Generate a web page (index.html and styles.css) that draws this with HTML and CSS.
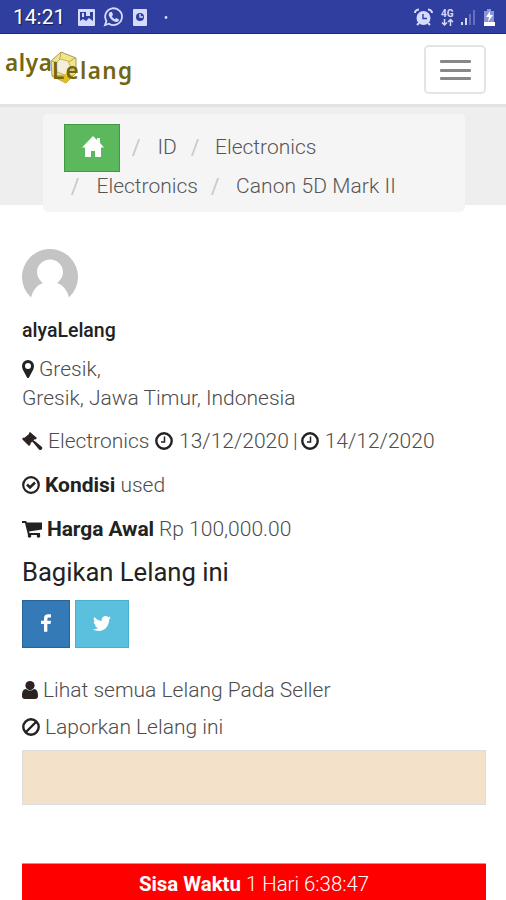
FILE: index.html
```html
<!DOCTYPE html>
<html lang="id">
<head>
<meta charset="utf-8">
<title>alyaLelang</title>
<link rel="stylesheet" href="styles.css">
</head>
<body>
<div class="status">
  <span class="time">14:21</span>
  <svg class="left-icons" width="92" height="34" viewBox="0 0 92 34">
    <path fill="#d6dafb" fill-rule="evenodd" d="M3 9h15q1 0 1 1v15q0 1-1 1H3q-1 0-1-1V10q0-1 1-1zM4 12v9l3-2 3 2 3-3 4 3v-9z"/>
    <path fill="#d6dafb" d="M6 13h2v4H6zM10 12h4v4h-4z"/>
    <path fill="none" stroke="#d6dafb" stroke-width="1.8" d="M29 25l1.400-4A8.400 8.400 0 1 1 33 23.700z"/>
    <path fill="#d6dafb" d="M34 12l2 0 1 3-1.200 1.200q1 2 3 3l1.400-1.200 2.800 1.500q0 2.500-2.800 2.500-5-1-7.400-6.500-.5-2 1.200-3.500z"/>
    <rect x="57" y="9" width="14" height="17" rx="1" fill="#d6dafb"/>
    <circle cx="64" cy="17" r="4" fill="#303f9f"/>
    <path d="M64 14v3h3" fill="none" stroke="#d6dafb" stroke-width="1.400"/>
    <circle cx="90" cy="17.500" r="1.400" fill="#d6dafb"/>
  </svg>
  <svg class="right-icons" width="86" height="34" viewBox="0 0 86 34">
    <g fill="none" stroke="#d6dafb" stroke-width="2">
      <circle cx="10.500" cy="18" r="6" fill="#d6dafb"/>
      <path d="M2 13q0-3 4-3.500M19 13q0-3-4-3.500M6 23l-2 2M15 23l2 2"/>
    </g>
    <path d="M10 14v4.500h4" fill="none" stroke="#303f9f" stroke-width="1.400"/>
    <text x="28" y="17" class="net">4G</text>
    <path d="M31.500 19v6M29 22.500l2.500 2.500 2.500-2.500M37.500 26v-6M35 22l2.500-2.500L40 22" fill="none" stroke="#d6dafb" stroke-width="1.500"/>
    <path fill="#d6dafb" d="M48 22h2v3h-2zM52 18h2v7h-2z"/>
    <path fill="#6570bd" d="M56 14h2v11h-2zM60 10h2v15h-2z"/>
    <path fill="#8b96d6" d="M74 9h4v2h3v11H71V11h3z"/>
    <path fill="#fff" d="M77 11l-4 6h3l-1 5 5-7h-3zM71 22h11v4H71z"/>
  </svg>
</div>
<header class="navbar">
  <svg class="logo" width="134" height="50" viewBox="0 0 134 50">
    <path d="M61 7l15 6 0 15-10 10-14-7-1-15z" fill="#efe58b" stroke="#a99a58"/>
    <path d="M61 7l-2 11-8-2M75 13l-8 5 9 10M66 38l-1-8-13 1" fill="none" stroke="#b9a754"/>
    <path d="M52 30l13 1 10-2-9 9z" fill="#e6bf18"/>
    <path d="M60 14l8 2 4 9-7 5-8-3-2-8z" fill="#f2f0dc" stroke="#c7b451"/>
    <text class="word" x="5" y="26" textLength="47">alya</text>
    <text class="word" x="52" y="33.500" textLength="80">Lelang</text>
  </svg>
  <div class="toggle"><i></i><i></i><i></i></div>
</header>
<nav class="crumb-band">
  <div class="crumbs">
    <div class="crumb-row first">
      <span class="home"><svg width="22" height="22" viewBox="0 0 22 22"><path fill="#fff" d="M11 0l4 4V2h3v5l4 4.500h-3V21h-6v-6H9v6H3v-9.500H0z"/></svg></span>
      <i class="slash s1"></i><span class="c-id">ID</span><i class="slash s2"></i><span class="c-el">Electronics</span>
    </div>
    <div class="crumb-row">
      <i class="slash s3"></i><span class="c-el2">Electronics</span><i class="slash s4"></i><span class="c-item">Canon 5D Mark II</span>
    </div>
  </div>
</nav>
<main>
  <svg class="avatar" width="56" height="56" viewBox="0 0 56 56">
    <path fill="#c4c4c4" d="M9 48.500A28 28 0 1 1 47 48.500C45 41 41 36 35 34c3.500-2.500 6-6.500 6-11 0-7-6-12.500-13-12.500S15 16 15 23c0 4.500 2.500 8.500 6 11-6 2-10 7-12 14.500z"/>
  </svg>
  <div class="row name"><b>alyaLelang</b></div>
  <div class="row place"><svg width="12" height="18" viewBox="0 0 12 18"><path fill="#222" fill-rule="evenodd" d="M6 0a6 6 0 0 1 6 6q0 2-1 4L7 17.500q-1 1-2 0L1 10Q0 8 0 6a6 6 0 0 1 6-6zm0 3a3 3 0 1 0 0 6 3 3 0 0 0 0-6z"/></svg><span>Gresik,</span></div>
  <div class="row region"><span>Gresik, Jawa Timur, Indonesia</span></div>
  <div class="row meta">
    <svg width="21" height="20" viewBox="0 0 21 20"><g fill="#2b2222"><path d="M8 1l7 6-1.500 1.500-1-.2-4 4 .2 1L7 15 0 8l1.500-1.500 1 .2L7 3V2z"/><path d="M11 9l3 2 6 5q1 1.500-.5 2.500-1 1-2.500 0l-5-6-2-2z"/></g></svg>
    <span class="w-cat">Electronics</span>
    <svg class="clock" width="18" height="18" viewBox="0 0 18 18"><circle cx="9" cy="9" r="7.700" fill="none" stroke="#222" stroke-width="2.400"/><path d="M9.500 4.500v5.500H6" fill="none" stroke="#222" stroke-width="1.500"/></svg>
    <span class="w-d1">13/12/2020</span><span class="bar">|</span>
    <svg width="18" height="18" viewBox="0 0 18 18"><circle cx="9" cy="9" r="7.700" fill="none" stroke="#222" stroke-width="2.400"/><path d="M9.500 4.500v5.500H6" fill="none" stroke="#222" stroke-width="1.500"/></svg>
    <span class="w-d2">14/12/2020</span>
  </div>
  <div class="row cond"><svg width="18" height="18" viewBox="0 0 18 18"><circle cx="9" cy="9" r="7.800" fill="none" stroke="#222" stroke-width="2.200"/><path d="M5 8.500l3 3L13 6.500" fill="none" stroke="#222" stroke-width="2.500"/></svg><b>Kondisi</b><span>used</span></div>
  <div class="row price"><svg width="20" height="18" viewBox="0 0 20 18"><g fill="#222"><path d="M0 1h4l1 1.500h15v7L7 11.500l.5 1.500H18v2H6L3 3H0z"/><circle cx="7.500" cy="16" r="1.800"/><circle cx="16.500" cy="16" r="1.800"/></g></svg><b>Harga Awal</b><span>Rp 100,000.00</span></div>
  <h2>Bagikan Lelang ini</h2>
  <div class="share">
    <span class="fb"><svg width="10" height="18" viewBox="0 0 11 19"><path fill="#fff" d="M11 0v3.500H9q-2 0-2 1.500v2h4l-.5 3.500H7V19H3.300v-8.500H0V7h3.300V4.500Q3.300 0 8 0z"/></svg></span>
    <span class="tw"><svg width="18" height="15" viewBox="0 0 18 15"><path fill="#fff" d="M18 1.800l-1.900 2C16 10 12 15 5.700 15 3.600 15 1.600 14.400 0 13.300c2 .2 3.800-.3 5.300-1.500-1.600 0-3-1.100-3.400-2.600h1.600C1.800 8.800.6 7.300.6 5.500l1.700.5C.8 4.900.3 2.800 1.200 1c2 2.300 4.500 3.700 7.600 3.900C8.300 2.300 10.200 0 12.500 0c1.100 0 2 .4 2.700 1.200L17.500.3 16 2.300z"/></svg></span>
  </div>
  <div class="row seller"><svg width="16" height="18" viewBox="0 0 16 18"><g fill="#2b2222"><circle cx="8" cy="4.600" r="4.600"/><path d="M4 8q4 3 8 0c3 0 4 3 4 7q0 3-3 3H3q-3 0-3-3c0-4 1-7 4-7z"/></g></svg><span>Lihat semua Lelang Pada Seller</span></div>
  <div class="row report"><svg width="18" height="18" viewBox="0 0 18 18"><g fill="none" stroke="#222" stroke-width="2.400"><circle cx="9" cy="9" r="7.700"/><path d="M14 4L4 14"/></g></svg><span>Laporkan Lelang ini</span></div>
  <div class="notice"></div>
  <div class="countdown"><b>Sisa Waktu</b><span>1 Hari 6:38:47</span></div>
</main>
</body>
</html>
```
FILE: styles.css
```css
* { box-sizing: border-box; }
body { margin: 0; width: 506px; height: 900px; overflow: hidden; background: #fff; font-family: Roboto, sans-serif; font-size: 21px; font-weight: 300; color: #4c4c4c; }
svg { display: block; flex: none; }
.status { height: 34px; background: #303f9f; border-bottom: 1px solid #17258c; display: flex; align-items: center; padding-left: 13px; }
.time { color: #fff; font-size: 21px; font-weight: 400; width: 63px; white-space: nowrap; text-shadow: 1px 1px 1px #141c55; }
.right-icons { margin-left: auto; margin-right: 7px; }
.net { font: 700 10px Roboto, sans-serif; fill: #d6dafb; }
.navbar { height: 73px; border-bottom: 3px solid #e2e2e2; display: flex; justify-content: space-between; padding: 11px 20px 0 0; }
.logo { margin-top: 0; }
.word { font: 600 22.5px "Noto Sans", sans-serif; fill: #736610; }
.toggle { width: 62px; height: 49px; border: 2px solid #e4e4e4; border-radius: 5px; display: flex; flex-direction: column; align-items: center; padding-top: 13px; gap: 5.500px; }
.toggle i { width: 31px; height: 3px; background: #888; border-radius: 1px; }
.crumb-band { height: 98px; background: #eee; padding: 7px 0 0 43px; }
.crumbs { width: 422px; height: 98px; background: #f5f5f5; border-radius: 5px; padding: 10px 0 0 21px; color: #555; }
.crumb-row { display: flex; align-items: center; height: 24px; white-space: nowrap; }
.crumb-row.first { height: 48px; }
.crumb-row.first > :not(.home) { position: relative; top: -1px; }
.crumb-row:last-child { margin-top: 2px; }
.home { width: 56px; height: 48px; background: #5cb85c; border: 1px solid #419a41; display: flex; align-items: center; justify-content: center; padding: 0 0 2px 2px; }
.slash { width: 1.500px; height: 17px; background: #ccc; transform: skewX(-20deg); flex: none; }
.s1 { margin-left: 15px; }
.c-id { margin-left: 21px; width: 20px; }
.s2 { margin-left: 16px; }
.c-el { margin-left: 20px; }
.s3 { margin-left: 10px; }
.c-el2 { margin-left: 21px; width: 102px; }
.s4 { margin-left: 15px; }
.c-item { margin-left: 21px; letter-spacing: 0.09px; }
main { padding: 44px 20px 0 22px; }
.avatar { height: 56px; }
.row { display: flex; align-items: center; white-space: nowrap; height: 28px; }
.row b, .countdown b { font-weight: 700; color: #222; }
.name { margin-top: 11px; height: 28px; }
.name b { font-weight: 500; font-size: 19.5px; }
.place { margin-top: 11px; gap: 5px; }
.region { margin-top: 1px; }
.meta { margin-top: 15px; }
.w-cat { margin-left: 5px; width: 102px; }
.clock { margin-left: 5px; }
.w-d1 { margin-left: 6px; width: 110px; }
.bar { margin: 0 3px 0 4px; }
.w-d2 { margin-left: 6px; }
.cond { margin-top: 16px; gap: 5px; }
.price { margin-top: 16px; gap: 5px; }
.price b { letter-spacing: -0.1px; }
h2 { margin: 14px 0 0; height: 30px; line-height: 31px; font-size: 25.6px; font-weight: 400; color: #222; white-space: nowrap; }
.share { display: flex; gap: 5px; margin-top: 13px; }
.share span { height: 48px; display: flex; align-items: center; justify-content: center; padding-bottom: 2px; }
.fb { width: 48px; background: #337ab7; border: 1px solid #2a6496; }
.tw { width: 54px; background: #5bc0de; border: 1px solid #46b0cf; }
.seller { margin-top: 28px; gap: 5px; }
.report { margin-top: 9px; gap: 5px; }
.notice { margin-top: 9px; height: 55px; background: #f3e1c9; border: 1px solid #ddd; }
.countdown { margin-top: 58px; height: 42px; background: #f00; border-top: 1px solid #e88; display: flex; justify-content: center; gap: 5px; line-height: 40px; color: #fff; font-size: 20.4px; white-space: nowrap; }
.countdown b { color: #fff; }
```
